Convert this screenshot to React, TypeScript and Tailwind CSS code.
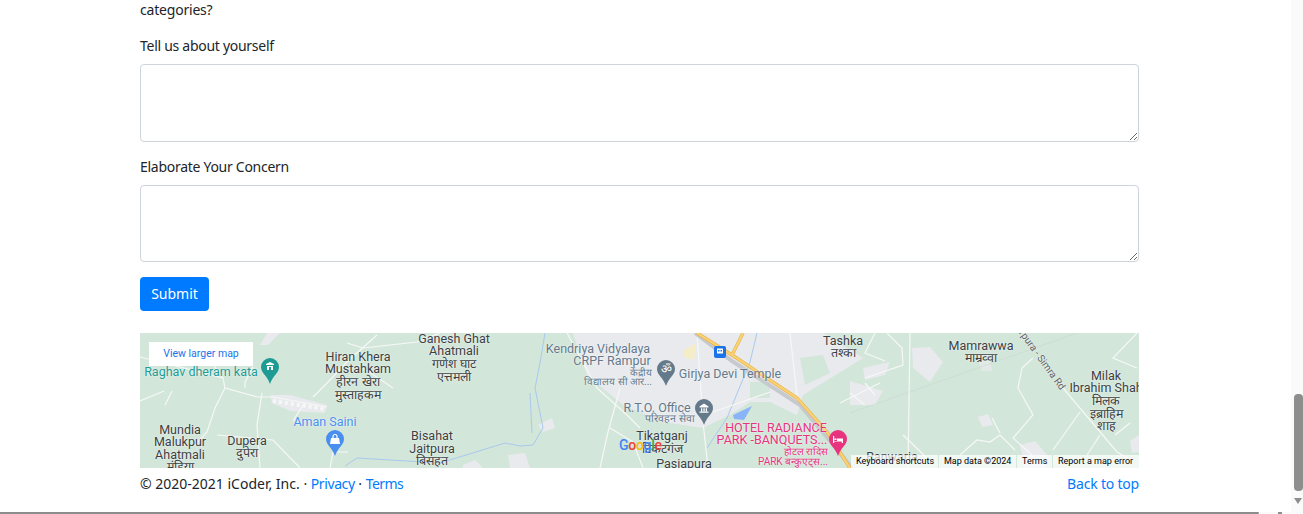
const roads = [
  "M0 24 L83 45 L85 55 L117 64 L133 64 L187 74",
  "M85 55 L75 75 L67 99 L55 112",
  "M83 45 L72 30",
  "M105 55 L105 49 L113 34",
  "M122 60 L117 92 L120 135",
  "M173 64 L190 47 L207 29 L237 2",
  "M207 10 L223 15 L277 9 L300 0",
  "M77 102 L133 107 L160 135",
  "M193 119 L208 119 M190 135 L193 119",
  "M153 88 L163 72",
  "M253 55 L223 35",
  "M0 68 L24 58 M25 72 L32 58",
  "M427 0 L457 55 L487 82 L500 95",
  "M480 55 L468 99 L460 135",
  "M470 95 L493 109 L503 135",
  "M557 0 L563 89 L568 135",
  "M650 0 L657 62",
  "M630 59 L573 79",
  "M770 0 L768 135",
  "M747 0 L762 15 L763 32 L725 45",
  "M735 0 L725 20 L745 28",
  "M710 60 L725 72 M725 50 L735 62",
  "M997 0 L973 25 L997 35",
  "M893 25 L882 35 L878 55 L893 82 L873 105 L892 122",
  "M923 55 L977 119 L987 125",
  "M940 79 L913 117",
  "M960 102 L947 122",
  "M820 122 L837 107 L850 109 L860 102 L875 117",
  "M852 85 L860 100",
  "M763 102 L787 125",
  "M990 90 L975 102",
  "M700 70 L740 50",
];

// left/top are the middle of each label, inside the map
const labels = [
  { text: "Hiran Khera", cls: "left-[218px] top-[24px] text-[12.500px] text-[#3c4043]" },
  { text: "Mustahkam", cls: "left-[218px] top-[36px] text-[12.500px] text-[#3c4043]" },
  { text: "हीरन खेरा", cls: "left-[218px] top-[49px] text-[12.500px] text-[#3c4043]" },
  { text: "मुस्ताहकम", cls: "left-[218px] top-[62px] text-[12.500px] text-[#3c4043]" },
  { text: "Ganesh Ghat", cls: "left-[314px] top-[6px] text-[12.500px] text-[#3c4043]" },
  { text: "Ahatmali", cls: "left-[314px] top-[18px] text-[12.500px] text-[#3c4043]" },
  { text: "गणेश घाट", cls: "left-[314px] top-[31px] text-[12.500px] text-[#3c4043]" },
  { text: "एत्तमली", cls: "left-[314px] top-[44px] text-[12.500px] text-[#3c4043]" },
  { text: "Raghav dheram kata", cls: "left-[61px] top-[39px] text-[12.500px] text-[#1e9c94]" },
  { text: "Aman Saini", cls: "left-[185px] top-[89px] text-[12.500px] text-[#4a8ff0]" },
  { text: "Mundia", cls: "left-[40px] top-[97px] text-[12.500px] text-[#3c4043]" },
  { text: "Malukpur", cls: "left-[40px] top-[109px] text-[12.500px] text-[#3c4043]" },
  { text: "Ahatmali", cls: "left-[40px] top-[122px] text-[12.500px] text-[#3c4043]" },
  { text: "मंडिया", cls: "left-[40px] top-[134px] text-[12.500px] text-[#3c4043]" },
  { text: "Dupera", cls: "left-[107px] top-[108px] text-[12.500px] text-[#3c4043]" },
  { text: "दुपेरा", cls: "left-[107px] top-[120px] text-[12.500px] text-[#3c4043]" },
  { text: "Bisahat", cls: "left-[292px] top-[103px] text-[12.500px] text-[#3c4043]" },
  { text: "Jaitpura", cls: "left-[292px] top-[116px] text-[12.500px] text-[#3c4043]" },
  { text: "बिसहत", cls: "left-[292px] top-[128px] text-[12.500px] text-[#3c4043]" },
  { text: "Kendriya Vidyalaya", cls: "left-[458px] top-[16px] text-[12.500px] text-[#64798a]" },
  { text: "CRPF Rampur", cls: "left-[472px] top-[28px] text-[12.500px] text-[#64798a]" },
  { text: "केंद्रीय", cls: "left-[501px] top-[40px] text-[10px] text-[#64798a]" },
  { text: "विद्यालय सी आर...", cls: "left-[478px] top-[49px] text-[10px] text-[#64798a]" },
  { text: "Girjya Devi Temple", cls: "left-[590px] top-[41px] text-[12.500px] text-[#64798a]" },
  { text: "R.T.O. Office", cls: "left-[517px] top-[75px] text-[12.500px] text-[#64798a]" },
  { text: "परिवहन सेवा", cls: "left-[530px] top-[86px] text-[10.500px] text-[#64798a]" },
  { text: "Tashka", cls: "left-[703px] top-[8px] text-[12.500px] text-[#3c4043]" },
  { text: "तश्का", cls: "left-[703px] top-[20px] text-[12.500px] text-[#3c4043]" },
  { text: "Tikatganj", cls: "left-[522px] top-[103px] text-[12.500px] text-[#3c4043]" },
  { text: "टिकटगंज", cls: "left-[522px] top-[116px] text-[12.500px] text-[#3c4043]" },
  { text: "Pasiapura", cls: "left-[544px] top-[131px] text-[12.500px] text-[#3c4043]" },
  { text: "HOTEL RADIANCE", cls: "left-[636px] top-[95px] text-[12.500px] text-[#e8337f]" },
  { text: "PARK -BANQUETS...", cls: "left-[632px] top-[107px] text-[12.500px] text-[#e8337f]" },
  { text: "होटल रादिस", cls: "left-[666px] top-[119px] text-[10px] text-[#e8337f]" },
  { text: "PARK बन्कुएट्स...", cls: "left-[653px] top-[129px] text-[10px] text-[#e8337f]" },
  { text: "Mamrawwa", cls: "left-[841px] top-[13px] text-[12.500px] text-[#3c4043]" },
  { text: "माम्रव्वा", cls: "left-[841px] top-[25px] text-[12.500px] text-[#3c4043]" },
  { text: "Milak", cls: "left-[966px] top-[43px] text-[12.500px] text-[#3c4043]" },
  { text: "Ibrahim Shah", cls: "left-[966px] top-[55px] text-[12.500px] text-[#3c4043]" },
  { text: "मिलक", cls: "left-[966px] top-[68px] text-[12.500px] text-[#3c4043]" },
  { text: "इब्राहिम", cls: "left-[966px] top-[81px] text-[12.500px] text-[#3c4043]" },
  { text: "शाह", cls: "left-[966px] top-[93px] text-[12.500px] text-[#3c4043]" },
  { text: "Ranwaria", cls: "left-[752px] top-[124px] text-[12.500px] text-[#3c4043]" },
];

function Pin({ x, y, color, children }: { x: number; y: number; color: string; children?: React.ReactNode }) {
  return (
    <g transform={`translate(${x} ${y})`}>
      <path d="M9 0a9 9 0 0 1 9 9c0 6-6 8-9 17C6 17 0 15 0 9a9 9 0 0 1 9-9z" fill={color} />
      {children}
    </g>
  );
}

function MapArt() {
  return (
    <svg className="absolute inset-0 h-full w-full" viewBox="0 0 999 135" fill="none">
      {/* town area */}
      <path
        d="M433 0 L447 42 L483 72 L523 89 L563 95 L590 82 L610 69 L630 69 L657 82 L663 62 L707 35 L723 25 L683 0Z"
        fill="#e8eaed"
      />
      <path d="M610 49 L630 49 L630 65 L610 65Z" fill="#d3e6da" />
      <path d="M660 25 L683 22 L690 40 L665 52Z" fill="#d3e6da" />
      <path d="M710 48 L743 58 L735 72 L710 72Z" fill="#e8eaed" />
      <path d="M723 35 L750 29 L745 42 L725 47Z" fill="#e8eaed" />
      <path d="M772 15 L790 14 L803 29 L790 49 L773 35Z" fill="#e8eaed" />
      <path d="M838 84 L848 81 L853 92 L842 94Z" fill="#e8eaed" />
      <path d="M838 28 L850 28 L852 38 L842 38Z" fill="#e3e9e6" />
      <path d="M880 112 L895 108 L910 125 L905 135 L885 135Z" fill="#e8eaed" />
      <path d="M990 108 L999 102 L999 119 L992 120Z" fill="#e8eaed" />
      <path d="M398 92 L412 85 L415 95 L403 99Z" fill="#e8eaed" />
      <path d="M368 122 L385 120 L390 135 L370 135Z" fill="#e8eaed" />
      <path d="M323 132 L335 127 L343 135 L323 135Z" fill="#e8eaed" />
      <path d="M130 62 L150 62 L187 72 L185 80 L150 78 L132 70Z" fill="#e8eaed" />
      <path d="M120 12 L127 0 L140 0 L128 12Z" fill="#e8eaed" />
      <path d="M593 82 L612 73 L604 87 L594 86Z" fill="#8ab4f8" />
      <path d="M544 17 L556 10 L554 27 L544 24Z" fill="#f5ecc8" />
      <path d="M710 80 L937 0" stroke="#c9d6d0" strokeWidth="0.6" />
      <path
        d="M205 133 L217 125 L300 130 L365 110 L380 113 L393 112 L403 95 L395 55 L400 30 L405 0 M617 0 L610 29 L587 85 L567 115 M390 60 L392 100"
        stroke="#a9c9ee"
        strokeWidth="1"
      />
      {roads.map((d) => (
        <path key={d} d={d} stroke="#f6f8f7" strokeWidth="1.2" />
      ))}
      <path d="M133 68 L185 76" stroke="#f6f8f7" strokeWidth="4" strokeDasharray="3 3" />
      <path d="M555 0 L592 28 L660 72 L690 108 L712 135" stroke="#c6c9ce" strokeWidth="4" />
      <path d="M557 0 L592 22 L657 65 L687 99 L710 135 M603 0 L592 22" stroke="#e8b64f" strokeWidth="3.4" />
      <path d="M557 0 L592 22 L657 65 L687 99 L710 135 M603 0 L592 22" stroke="#fbd276" strokeWidth="2" />

      <rect x="574" y="13" width="12" height="12" rx="2" fill="#1a73e8" />
      <path d="M577 15.500h6v5h-6z" fill="#fff" />
      <path d="M578 17h1.500v1.500H578zM580.500 17H582v1.500h-1.500z" fill="#1a73e8" />

      <Pin x={121} y={25} color="#1e9c94">
        <path d="M5 6l4-2 4 2v1H5zM6 8h6v4H6z" fill="#fff" />
        <path d="M8 9h2v3H8z" fill="#1e9c94" />
      </Pin>
      <Pin x={186} y={97} color="#4a8ff0">
        <path d="M5 8h8l1 6H4z" fill="#fff" />
        <path d="M7 8V6.500a2 2 0 0 1 4 0V8" stroke="#fff" strokeWidth="1.200" />
      </Pin>
      <Pin x={517} y={27} color="#64798a" />
      <Pin x={555} y={66} color="#64798a">
        <path d="M4.500 7.500L9 4.500l4.500 3v1h-9zM4.500 12.500h9v1.200h-9zM6 9.200h1.300v3H6zM8.400 9.200h1.300v3H8.400zM10.700 9.200H12v3h-1.300z" fill="#fff" />
      </Pin>
      <Pin x={689} y={97} color="#e8337f">
        <path d="M4 6v7h1.200v-1.500h7.600V13H14V8.500h-6V11H5.200V6zM5.500 8.500h2V10h-2z" fill="#fff" />
      </Pin>
    </svg>
  );
}

function MapEmbed() {
  return (
    <div className="relative mt-[22px] h-[135px] w-[999px] overflow-hidden bg-[#d3e6da] font-['Roboto',sans-serif]">
      <MapArt />
      {labels.map((l) => (
        <span
          key={l.text + l.cls}
          className={`absolute -translate-x-1/2 -translate-y-1/2 whitespace-nowrap leading-none [text-shadow:0_0_2px_#fff] ${l.cls}`}
        >
          {l.text}
        </span>
      ))}
      <span className="absolute left-[526px] top-[36px] -translate-x-1/2 -translate-y-1/2 text-[12px] leading-none text-white">
        ॐ
      </span>
      <span className="absolute left-[902px] top-[27px] -translate-x-1/2 -translate-y-1/2 rotate-[54deg] whitespace-nowrap text-[10px] leading-none text-[#5f6368] [text-shadow:0_0_2px_#fff]">
        rpura - Simra Rd
      </span>
      <a className="absolute left-[9px] top-[9px] flex h-[24px] w-[104px] items-center justify-center bg-white text-[10.500px] text-[#1a73e8]">
        View larger map
      </a>
      <div className="absolute left-[479px] top-[105px] text-[14px] font-medium leading-none tracking-[-0.3px]">
        <span className="text-[#4285f4]">G</span>
        <span className="text-[#ea4335]">o</span>
        <span className="text-[#fbbc05]">o</span>
        <span className="text-[#4285f4]">g</span>
        <span className="text-[#34a853]">l</span>
        <span className="text-[#ea4335]">e</span>
      </div>
      <div className="absolute bottom-0 left-[711px] flex h-[13px] w-[288px] items-center gap-px whitespace-nowrap text-[9px] leading-none text-black">
        <span className="flex h-full w-[87px] items-center bg-white/70 pl-[5px]">Keyboard shortcuts</span>
        <span className="flex h-full w-[77px] items-center bg-white/70 pl-[5px]">Map data ©2024</span>
        <span className="flex h-full w-[35px] items-center bg-white/70 pl-[5px]">Terms</span>
        <span className="flex h-full flex-1 items-center bg-white/70 pl-[5px]">Report a map error</span>
      </div>
    </div>
  );
}

export default function App() {
  return (
    <div className="flex h-[514px] w-[1303px] flex-col overflow-hidden bg-white font-['Noto_Sans',sans-serif] text-[14px] leading-[21.600px] text-[#212529]">
      <div className="flex min-h-0 flex-1">
        <main className="flex-1 pl-[140px]">
          <p className="-mt-px tracking-[-0.2px]">categories?</p>
          <label className="mt-[14px] block tracking-[-0.28px]">Tell us about yourself</label>
          <textarea className="mt-[8px] block h-[78px] w-[999px] rounded-[4px] border border-[#ced4da] bg-white" />
          <label className="mt-[14px] block tracking-[-0.28px]">Elaborate Your Concern</label>
          <textarea className="mt-[7px] block h-[77px] w-[999px] rounded-[4px] border border-[#ced4da] bg-white" />
          <button className="mt-[15px] block h-[34px] w-[69px] rounded-[4px] bg-[#007bff] text-white">Submit</button>
          <MapEmbed />
          <footer className="mt-[5px] flex w-[999px] justify-between">
            <p>
              © 2020-2021 iCoder, Inc. · <a className="tracking-[-0.4px] text-[#007bff]">Privacy</a> ·{" "}
              <a className="tracking-[-0.6px] text-[#007bff]">Terms</a>
            </p>
            <a className="tracking-[-0.2px] text-[#007bff]">Back to top</a>
          </footer>
        </main>
        <aside className="flex w-[12px] flex-col items-end bg-[#fafafa] pt-[394px]">
          <div className="h-[97px] w-[9px] rounded-[4px] bg-[#8d8d8d]" />
          <div className="mr-[1px] mt-[7px] h-0 w-0 border-x-[4px] border-t-[6px] border-x-transparent border-t-[#8d8d8d]" />
        </aside>
      </div>
      <div className="flex h-[2px] w-full shrink-0 bg-[#fafafa]">
        <div className="h-[2px] w-[1259px] rounded-r-[2px] bg-[#8d8d8d]" />
        <div className="ml-[19px] h-[2px] w-[4px] bg-[#8d8d8d]" />
      </div>
    </div>
  );
}
